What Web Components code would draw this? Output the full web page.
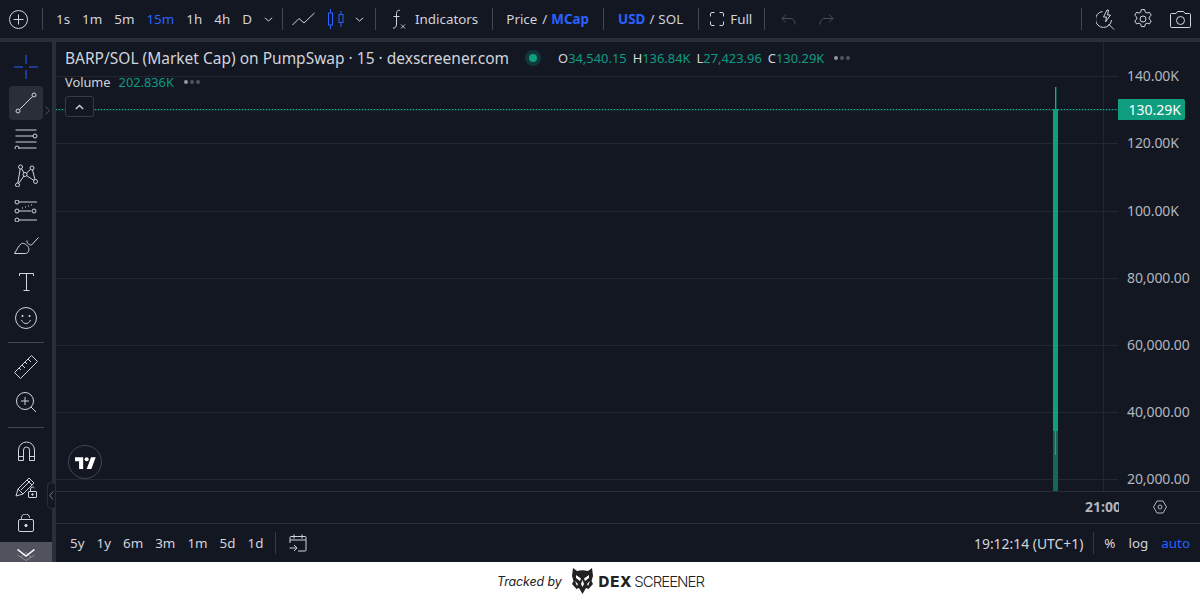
<!DOCTYPE html>
<html>
<head>
<meta charset="utf-8">
<title>BARP/SOL chart</title>
<style>
  html, body { margin: 0; height: 100%; background: #fff; overflow: hidden; }
  body { font-family: "Noto Sans", "Open Sans", sans-serif; color: #d1d4dc; }
</style>
</head>
<body>
<tv-page>
  <tv-topbar slot="top"></tv-topbar>
  <tv-sidebar slot="side"></tv-sidebar>
  <tv-chart slot="chart"></tv-chart>
  <tv-rangebar slot="range"></tv-rangebar>
  <tracked-footer slot="footer"></tracked-footer>
</tv-page>

<script>
const ICON = 'fill="none" stroke="currentColor" stroke-width="1"';

class TvPage extends HTMLElement {
	constructor() {
		super();
		this.attachShadow({ mode: 'open' });
		this.shadowRoot.innerHTML = `
		<style>
			:host { display: flex; flex-direction: column; width: 1200px; height: 600px; }
			.app { position: relative; height: 562px; display: grid; grid-template-columns: 52px 1fr; grid-template-rows: 38px 1fr;
				background: #2a2e39; row-gap: 4px; column-gap: 4px; }
			.top { grid-column: 1 / 3; display: block; }
			.main { display: flex; flex-direction: column; min-width: 0; min-height: 0; }
			.handle { position: absolute; left: 47px; top: 482px; width: 7px; height: 25px; background: #131722; border: 1px solid #2a2e39; border-radius: 4px;
				display: flex; align-items: center; justify-content: center; color: #787b86; }
		</style>
		<div class="app">
			<div class="top"><slot name="top"></slot></div>
			<slot name="side"></slot>
			<div class="main"><slot name="chart"></slot><slot name="range"></slot></div>
			<div class="handle"><svg width="5" height="9" viewBox="0 0 5 9" fill="none" stroke="currentColor"><path d="M4 .5.8 4.500 4 8.500"/></svg></div>
		</div>
		<slot name="footer"></slot>`;
	}
}

// one clickable thing in a toolbar, text or icon goes in the slot
class TvBtn extends HTMLElement {
	constructor() {
		super();
		this.attachShadow({ mode: 'open' });
		this.shadowRoot.innerHTML = `
		<style>
			:host { display: inline-flex; align-items: center; justify-content: center; height: 100%;
				font-size: 13.400px; color: #d1d4dc; white-space: nowrap; }
			:host([active]) { color: #2962ff; }
		</style>
		<slot></slot>`;
	}
}

class TvTopbar extends HTMLElement {
	constructor() {
		super();
		this.attachShadow({ mode: 'open' });
		const chev = `<svg width="9" height="5" viewBox="0 0 9 5" ${ICON}><path d="M.8.8 4.500 4 8.200.8"/></svg>`;
		this.shadowRoot.innerHTML = `
		<style>
			:host { display: flex; align-items: center; height: 38px; background: #131722; padding-left: 9px; box-sizing: border-box; }
			.sep { width: 1px; height: 22px; background: #434651; flex: none; }
			svg { display: block; }
			.iv { display: flex; height: 100%; align-items: center; margin-left: 13px; gap: 12px; }
			.push { flex: 1; }
			b { font-weight: 700; color: #2962ff; }
		</style>
		<tv-btn><svg width="19" height="19" viewBox="0 0 19 19" ${ICON}><circle cx="9.500" cy="9.500" r="9"/><path d="M9.500 4.500v10M4.500 9.500h10"/></svg></tv-btn>
		<span class="sep" style="margin-left:14px"></span>
		<div class="iv">
			<tv-btn>1s</tv-btn><tv-btn>1m</tv-btn><tv-btn>5m</tv-btn><tv-btn active>15m</tv-btn><tv-btn>1h</tv-btn><tv-btn>4h</tv-btn><tv-btn>D</tv-btn>
			<tv-btn>${chev}</tv-btn>
		</div>
		<span class="sep" style="margin-left:9px"></span>
		<tv-btn style="margin-left:9px"><svg width="23" height="14" viewBox="0 0 23 14" ${ICON}><path d="M.5 13 7 6.500 12 11 22.500 1"/></svg></tv-btn>
		<tv-btn style="margin-left:13px;color:#2962ff"><svg width="16" height="20" viewBox="0 0 16 20" ${ICON}><rect x=".5" y="4" width="4" height="12"/><path d="M2.500 0v4M2.500 16v4"/><rect x="11" y="5.500" width="4" height="8"/><path d="M13 2v3.500M13 13.500V18"/></svg></tv-btn>
		<tv-btn style="margin-left:11px">${chev}</tv-btn>
		<span class="sep" style="margin-left:11px"></span>
		<tv-btn style="margin-left:16px"><svg width="14" height="21" viewBox="0 0 14 21" ${ICON}><path d="M8 1.500C6 .5 4.500 2 4.500 4.500V15c0 3-1.500 4.500-3.500 4"/><path d="M1.500 7.500h6"/><path d="M9 15.500l4 4M13 15.500l-4 4" stroke-width=".9"/></svg></tv-btn>
		<tv-btn style="margin-left:9px">Indicators</tv-btn>
		<span class="sep" style="margin-left:14px"></span>
		<tv-btn style="margin-left:13px">Price<span style="margin:0 4px 0 5px">/</span><b>MCap</b></tv-btn>
		<span class="sep" style="margin-left:14px"></span>
		<tv-btn style="margin-left:14px"><b>USD</b><span style="margin:0 4px">/</span>SOL</tv-btn>
		<span class="sep" style="margin-left:15px"></span>
		<tv-btn style="margin-left:11px"><svg width="14" height="14" viewBox="0 0 14 14" ${ICON}><path d="M.5 4.500V2a1.500 1.500 0 0 1 1.500-1.500h2.500M9.500.5H12A1.500 1.500 0 0 1 13.500 2v2.500M13.500 9.500V12a1.500 1.500 0 0 1-1.500 1.500H9.500M4.500 13.500H2A1.500 1.500 0 0 1 .5 12V9.500"/></svg></tv-btn>
		<tv-btn style="margin-left:6px">Full</tv-btn>
		<span class="sep" style="margin-left:12px"></span>
		<tv-btn style="margin-left:16px;color:#4a4e59"><svg width="15" height="11" viewBox="0 0 15 11" ${ICON}><path d="M5 .5 1 4.500l4 4M1 4.500h8c3 0 5 2 5 6"/></svg></tv-btn>
		<tv-btn style="margin-left:23px;color:#4a4e59"><svg width="15" height="11" viewBox="0 0 15 11" ${ICON}><path d="M10 .5l4 4-4 4M14 4.500H6c-3 0-5 2-5 6"/></svg></tv-btn>
		<span class="push"></span>
		<span class="sep"></span>
		<tv-btn style="margin-left:14px"><svg width="20" height="21" viewBox="0 0 20 21" ${ICON}><path d="M6.500 2.500a8 8 0 1 0 9 8.500"/><path d="M12.500 15 18 20.500"/><path d="M11 1 7.500 8h3l-1 5 5-7h-3l1-5z"/></svg></tv-btn>
		<tv-btn style="margin-left:17px"><svg width="20" height="20" viewBox="0 0 20 20" ${ICON}><path d="M8.300.6h3.400l.6 2.600 1.700.9 2.500-.8 1.700 3-2 1.800v2l2 1.800-1.700 3-2.500-.8-1.700.9-.6 2.600H8.300l-.6-2.600-1.700-.9-2.500.8-1.700-3 2-1.800v-2l-2-1.800 1.700-3 2.500.8 1.700-.9z" stroke-linejoin="round"/><circle cx="10" cy="10" r="3"/></svg></tv-btn>
		<tv-btn style="margin-left:17px;margin-right:9px"><svg width="21" height="17" viewBox="0 0 21 17" ${ICON}><path d="M1.500 2.500h4.500l1.500-2h6l1.500 2h4.500a1 1 0 0 1 1 1v12a1 1 0 0 1-1 1h-18a1 1 0 0 1-1-1v-12a1 1 0 0 1 1-1z"/><circle cx="10.500" cy="9.500" r="4"/></svg></tv-btn>`;
	}
}

class TvSidebar extends HTMLElement {
	constructor() {
		super();
		this.attachShadow({ mode: 'open' });
		const s = (w, h, inner) => `<svg width="${w}" height="${h}" viewBox="0 0 ${w} ${h}" ${ICON}>${inner}</svg>`;
		const bg = 'fill="#131722"';
		this.shadowRoot.innerHTML = `
		<style>
			:host { display: flex; flex-direction: column; align-items: center; position: relative; background: #131722;
				height: 520px; overflow: hidden; }
			.t { width: 52px; height: 35.900px; flex: none; display: flex; align-items: center; justify-content: center; color: #d1d4dc; position: relative; }
			.sel::before { content: ""; position: absolute; left: 9px; top: 1px; width: 34px; height: 34px; border-radius: 4px; background: #2a2e39; }
			.t svg { position: relative; display: block; }
			.hr { width: 36px; height: 1px; background: #434651; margin: 6px 0; flex: none; }
			.more { position: absolute; right: 2px; top: 56px; color: #50535e; }
			.foot { position: absolute; left: 0; right: 0; bottom: 0; height: 20px; background: #50535e; overflow: hidden;
				display: flex; justify-content: center; color: #fff; }
			.foot svg { margin-top: 7px; }
		</style>
		<div class="t" style="color:#2962ff;margin-top:7px">${s(24, 24, '<path d="M12 0v9M12 15v9M0 12h9M15 12h9"/>')}</div>
		<div class="t sel">${s(22, 22, '<circle cx="19" cy="3" r="2"/><circle cx="3" cy="19" r="2"/><path d="M17.600 4.400 4.400 17.600"/>')}</div>
		<div class="t">${s(24, 20, `<path d="M1.500 1h21M1.500 7h20M1.500 13h21M3.500 19h19"/><circle cx="21" cy="7" r="2" ${bg}/><circle cx="3" cy="19" r="2" ${bg}/>`)}</div>
		<div class="t">${s(24, 24, `<path d="M6.500 4 11 11.500M6.500 4 3.500 22M18 5l-7 6.500M18 5l3.500 13.500M11 11.500l10.500 7M11 11.500 3.500 22"/><circle cx="6.500" cy="4" r="2" ${bg}/><circle cx="18" cy="5" r="2" ${bg}/><circle cx="11" cy="11.500" r="2" ${bg}/><circle cx="3.500" cy="22" r="2" ${bg}/><circle cx="21.500" cy="18.500" r="2" ${bg}/>`)}</div>
		<div class="t">${s(24, 22, `<path d="M5 2h18M5 11h12M5 20h18"/><path d="M8 8h1M11 7h1M14 6h1M17 5h1"/><circle cx="3" cy="2" r="2" ${bg}/><circle cx="3" cy="11" r="2" ${bg}/><circle cx="20" cy="11" r="2" ${bg}/><circle cx="3" cy="20" r="2" ${bg}/>`)}</div>
		<div class="t">${s(25, 18, '<path d="M.5 16.500h11c3 0 4-4 3-6s-4-5-7-4c-3 2-5 7-7 10z"/><path d="M13 3.500c-.5 2 2 5 4.500 4.500L24.500.5"/>')}</div>
		<div class="t">${s(15, 18, '<path d="M.5 3V.5h14V3M7.500 .5v17M4.500 17.500h6"/>')}</div>
		<div class="t">${s(22, 22, '<circle cx="11" cy="11" r="10.500"/><path d="M6.500 13c1 2.500 3 3.500 4.500 3.500s3.500-1 4.500-3.500"/><path d="M7.500 8v2M14.500 8v2" stroke-width="1.600"/>')}</div>
		<div class="hr"></div>
		<div class="t">${s(24, 24, '<path d="M.5 17.500 17.500.5l6 6L6.500 23.500z"/><path d="M5 13l2 2M8 10l3 3M11 7l2 2M14 4l3 3"/>')}</div>
		<div class="t">${s(20, 22, '<circle cx="9" cy="9" r="8.500"/><path d="M9 5v8M5 9h8M15 15l6 6"/>')}</div>
		<div class="hr" style="margin:6px 0 5px"></div>
		<div class="t">${s(17, 20, '<path d="M.5 19.500V9a8 8 0 0 1 16 0v10.500h-5V9a3 3 0 0 0-6 0v10.500z"/><path d="M.5 15.500h5M11.500 15.500h5"/>')}</div>
		<div class="t">${s(22, 22, `<path d="M1 20 3 13 14 2l5 5L8 18z"/><path d="M3 13l5 5M12 4l5 5M6 14l9-9"/><rect x="13.500" y="15.500" width="8" height="6" rx=".5" ${bg}/><path d="M15.500 15.500V13a2.200 2.200 0 0 1 4-1"/><circle cx="17.500" cy="18.500" r=".8" fill="currentColor"/>`)}</div>
		<div class="t">${s(16, 18, '<rect x=".5" y="5.500" width="15" height="12" rx="1.500"/><path d="M3.500 5.500V4.500a4 4 0 0 1 8-.8"/><circle cx="8" cy="11.500" r="1.200" fill="currentColor"/>')}</div>
		<span class="more">${s(5, 9, '<path d="M.5.5l4 4-4 4"/>')}</span>
		<div class="foot">${s(18, 13, '<path d="M.5 6 9 11.500 17.500 6M4 8 9 3.500 14 8" stroke="#8a8d97"/><path d="M.5.500 9 7 17.500.500" stroke-width="1.500"/>')}</div>`;
	}
}

class TvChart extends HTMLElement {
	constructor() {
		super();
		this.attachShadow({ mode: 'open' });
		const labels = [['140.00K', 76], ['120.00K', 143], ['100.00K', 211], ['80,000.00', 278], ['60,000.00', 345], ['40,000.00', 412], ['20,000.00', 479]];
		const grid = labels.map(l => `<div class="gl" style="top:${l[1] - 42}px"></div><div class="pl" style="top:${l[1] - 42}px">${l[0]}</div>`).join('');
		this.shadowRoot.innerHTML = `
		<style>
			:host { display: block; position: relative; flex: none; height: 482px; background: #131722; overflow: hidden; font-size: 14px; }
			.gl { position: absolute; left: 0; width: 1062px; height: 1px; background: #232733; }
			.vl { position: absolute; left: 1047px; top: 0; width: 1px; height: 449px; background: #232733; }
			.pl { position: absolute; left: 1071px; transform: translateY(-50%); font-size: 14px; color: #b2b5be; letter-spacing: -.1px; white-space: nowrap; line-height: 20px; }
			/* faint teal under the dots so the line keeps its colour in the photo */
			.price { position: absolute; left: 0; top: 67px; width: 1062px; height: 1px; box-shadow: 0 1px 0 rgba(8,153,129,.18);
				background: repeating-linear-gradient(90deg, #12b795 0 1px, rgba(8,153,129,.3) 1px 3px); }
			.tag { position: absolute; left: 1062px; top: 57px; width: 67px; height: 21px; background: #0f9d80; color: #fff; border-radius: 0 2px 2px 0;
				font-size: 14px; line-height: 21px; text-align: right; padding-right: 4px; box-sizing: border-box; }
			.wick { position: absolute; left: 999px; top: 45px; width: 1px; height: 22px; background: #0fae8e; box-shadow: 1px 0 0 rgba(8,153,129,.45); }
			.body { position: absolute; left: 997px; top: 67px; width: 5px; height: 322px; background: #0f9d80; }
			.vol { position: absolute; left: 997px; top: 389px; width: 5px; height: 60px; background: #0f6a5b; }
			.volw { position: absolute; left: 999px; top: 389px; width: 1px; height: 24px; background: #14a88c; }
			.legend { position: absolute; left: 9px; top: 5px; display: flex; align-items: center; height: 22px; white-space: nowrap; }
			.title { font-size: 15.500px; color: #d1d4dc; }
			.dot { width: 16px; height: 16px; border-radius: 50%; background: rgba(8,153,129,.25); margin: 0 17px 0 16px; display: flex; align-items: center; justify-content: center; }
			.dot::after { content: ""; width: 8px; height: 8px; border-radius: 50%; background: #0f9d80; }
			.ohlc { font-size: 12.900px; color: #d1d4dc; display: flex; gap: 6px; }
			.g { color: #0f9a82; }
			.dots { display: inline-flex; gap: 2px; margin-left: 10px; }
			.dots i { width: 4px; height: 4px; border-radius: 50%; background: #50535e; }
			.dots i:first-child { background: #9598a1; }
			.vol-legend { position: absolute; left: 9px; top: 30px; display: flex; align-items: center; height: 20px; font-size: 12.800px; white-space: nowrap; }
			.collapse { position: absolute; left: 9px; top: 54px; width: 29px; height: 21px; box-sizing: border-box; border: 1px solid #363a45; border-radius: 3px;
				background: #131722; display: flex; align-items: center; justify-content: center; color: #d1d4dc; }
			.logo { position: absolute; left: 12px; top: 403px; width: 34px; height: 34px; box-sizing: border-box; border: 1px solid #434651; border-radius: 50%;
				display: flex; align-items: center; justify-content: center; background: #131722; }
			.axis { position: absolute; left: 0; right: 0; top: 449px; height: 33px; border-top: 1px solid #2a2e39; border-bottom: 1px solid #2a2e39; box-sizing: border-box; background: #131722; }
			.time { position: absolute; left: 1029px; top: 5px; width: 33.500px; overflow: hidden; font-weight: 700; font-size: 14px; line-height: 20px; color: #b2b5be; white-space: nowrap; }
			.gear { position: absolute; left: 1097px; top: 8px; color: #b2b5be; }
		</style>
		${grid}
		<div class="vl"></div>
		<div class="price"></div>
		<div class="wick"></div><div class="body"></div><div class="vol"></div><div class="volw"></div>
		<div class="tag">130.29K</div>
		<div class="legend">
			<span class="title">BARP/SOL (Market Cap) on PumpSwap · 15 · dexscreener.com</span>
			<span class="dot"></span>
			<span class="ohlc"><span>O<span class="g">34,540.15</span></span><span>H<span class="g">136.84K</span></span><span>L<span class="g">27,423.96</span></span><span>C<span class="g">130.29K</span></span></span>
			<span class="dots"><i></i><i></i><i></i></span>
		</div>
		<div class="vol-legend">Volume<span class="g" style="margin-left:8px">202.836K</span><span class="dots"><i></i><i></i><i></i></span></div>
		<div class="collapse"><svg width="9" height="6" viewBox="0 0 9 6" fill="none" stroke="currentColor" stroke-width="1.300"><path d="M.8 5 4.500 1.500 8.200 5"/></svg></div>
		<div class="logo"><svg width="21" height="13" viewBox="0 0 36 22" fill="#fff"><path d="M14 22H7V9H0V2h14v20zM28 22h-8l7.500-20h8L28 22z"/><circle cx="20" cy="5.500" r="3.500"/></svg></div>
		<div class="axis">
			<div class="time">21:00</div>
			<svg class="gear" width="14" height="14" viewBox="0 0 14 14" fill="none" stroke="currentColor"><path d="M4 1h6l3.500 6L10 13H4L.5 7z"/><circle cx="7" cy="7" r="2"/></svg>
		</div>`;
	}
}

class TvRangebar extends HTMLElement {
	constructor() {
		super();
		this.attachShadow({ mode: 'open' });
		this.shadowRoot.innerHTML = `
		<style>
			:host { display: flex; align-items: center; height: 38px; flex: none; background: #131722; padding-left: 14px; padding-right: 10px; color: #b2b5be; }
			.r { display: flex; gap: 12px; height: 100%; }
			.sep { width: 1px; height: 22px; background: #363a45; }
			.push { flex: 1; }
		</style>
		<div class="r"><tv-btn>5y</tv-btn><tv-btn>1y</tv-btn><tv-btn>6m</tv-btn><tv-btn>3m</tv-btn><tv-btn>1m</tv-btn><tv-btn>5d</tv-btn><tv-btn>1d</tv-btn></div>
		<span class="sep" style="margin-left:12px"></span>
		<tv-btn style="margin-left:13px"><svg width="18" height="18" viewBox="0 0 18 18" fill="none" stroke="currentColor"><path d="M1 9V3.500a1 1 0 0 1 1-1h14a1 1 0 0 1 1 1V16a1 1 0 0 1-1 1h-7M1 6h16M5 .5v4M13 .5v4M.5 14h7M5 11l3 3-3 3"/></svg></tv-btn>
		<span class="push"></span>
		<tv-btn style="font-size:13.900px">19:12:14 (UTC+1)</tv-btn>
		<span class="sep" style="margin-left:10px"></span>
		<tv-btn style="margin-left:10px">%</tv-btn>
		<tv-btn style="margin-left:13px">log</tv-btn>
		<tv-btn active style="margin-left:13px">auto</tv-btn>`;
	}
}

class TrackedFooter extends HTMLElement {
	constructor() {
		super();
		this.attachShadow({ mode: 'open' });
		this.shadowRoot.innerHTML = `
		<style>
			:host { display: flex; align-items: center; height: 38px; background: #fff; color: #222; padding-left: 497px; }
			.by { font: italic 12.400px "Inter", "Liberation Sans", sans-serif; letter-spacing: -.1px; }
			svg { margin-left: 10px; display: block; }
			.dex { margin-left: 6px; font: 800 15px "Inter", "Liberation Sans", sans-serif; letter-spacing: .8px; color: #222; }
			.sc { font: 300 15px "Inter", "Liberation Sans", sans-serif; margin-left: 2px; letter-spacing: -1px; color: #222; }
		</style>
		<span class="by">Tracked by</span>
		<svg width="21" height="26" viewBox="0 0 21 26" fill="#222"><path d="M1 0 5 3Q10.500 1.500 16 3L20 0 21 8 19.500 13 21 16 16.500 21 14 20 10.500 26 7 20 4.500 21 0 16 1.500 13 0 8z"/><path d="M4 7l5 3.500-1 2.500-4-3zM17 7l-5 3.500 1 2.500 4-3zM10.500 12l1.500 4-1.500 3-1.500-3zM3 13l3 3-1 2zM18 13l-3 3 1 2z" fill="#fff"/></svg>
		<span class="dex">DEX</span><span class="sc">SCREENER</span>`;
	}
}

customElements.define('tv-page', TvPage);
customElements.define('tv-btn', TvBtn);
customElements.define('tv-topbar', TvTopbar);
customElements.define('tv-sidebar', TvSidebar);
customElements.define('tv-chart', TvChart);
customElements.define('tv-rangebar', TvRangebar);
customElements.define('tracked-footer', TrackedFooter);
</script>
</body>
</html>
